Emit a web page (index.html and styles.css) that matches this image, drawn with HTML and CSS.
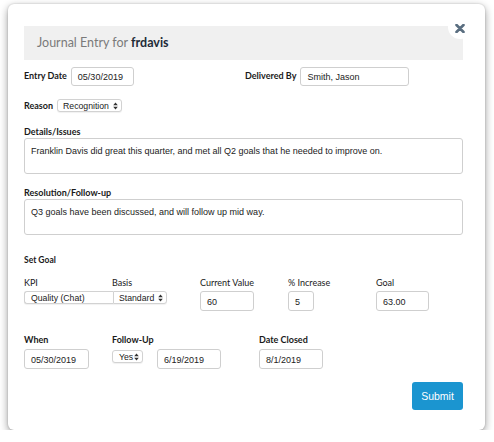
FILE: index.html
```html
<!DOCTYPE html>
<html>
<head>
<meta charset="utf-8">
<link rel="stylesheet" href="styles.css">
</head>
<body>
<div class="modal">
  <button class="close" aria-label="Close">
    <svg width="10" height="9" viewBox="0 0 10 9"><path d="M1.5 1 L8.5 8 M8.5 1 L1.5 8" stroke="#5a6e80" stroke-width="2.6" stroke-linecap="round"/></svg>
  </button>
  <div class="header">Journal Entry for <strong>frdavis</strong></div>

  <div class="row-top">
    <div class="group">
      <span class="lbl">Entry Date</span>
      <span class="input w63">05/30/2019</span>
    </div>
    <div class="group">
      <span class="lbl">Delivered By</span>
      <span class="input w109">Smith, Jason</span>
    </div>
  </div>

  <div class="row-reason group">
    <span class="lbl">Reason</span>
    <span class="select w65">Recognition<svg class="arr" width="5" height="8" viewBox="0 0 5 8"><path d="M2.5 0.5 L4.8 3.2 L0.2 3.2 Z M2.5 7.5 L4.8 4.8 L0.2 4.8 Z" fill="#333"/></svg></span>
  </div>

  <div class="lbl block first">Details/Issues</div>
  <div class="textarea">Franklin Davis did great this quarter, and met all Q2 goals that he needed to improve on.</div>

  <div class="lbl block second">Resolution/Follow-up</div>
  <div class="textarea">Q3 goals have been discussed, and will follow up mid way.</div>

  <div class="lbl setgoal">Set Goal</div>

  <div class="goal-grid">
    <span class="sub">KPI</span>
    <span class="sub">Basis</span>
    <span class="sub">Current Value</span>
    <span class="sub">% Increase</span>
    <span class="sub">Goal</span>
    <span class="select kpi">Quality (Chat)</span>
    <span class="select basis">Standard<svg class="arr" width="5" height="8" viewBox="0 0 5 8"><path d="M2.5 0.5 L4.8 3.2 L0.2 3.2 Z M2.5 7.5 L4.8 4.8 L0.2 4.8 Z" fill="#333"/></svg></span>
    <span class="input tall w54">60</span>
    <span class="input tall w26">5</span>
    <span class="input tall w53">63.00</span>
  </div>

  <div class="when-grid">
    <span class="lbl">When</span>
    <span class="lbl">Follow-Up</span>
    <span class="lbl">Date Closed</span>
    <span class="input tall w65">05/30/2019</span>
    <span class="follow">
      <span class="select yes">Yes<svg class="arr" width="5" height="8" viewBox="0 0 5 8"><path d="M2.5 0.5 L4.8 3.2 L0.2 3.2 Z M2.5 7.5 L4.8 4.8 L0.2 4.8 Z" fill="#333"/></svg></span>
      <span class="input tall w64">6/19/2019</span>
    </span>
    <span class="input tall w64">8/1/2019</span>
  </div>

  <div class="actions">
    <button class="submit">Submit</button>
  </div>
</div>
</body>
</html>
```

FILE: styles.css
```css
html, body {
  margin: 0;
  padding: 0;
  background: #ffffff;
}

body {
  font-family: Lato, "Liberation Sans", sans-serif;
  color: #222;
}

.modal {
  position: relative;
  box-sizing: border-box;
  margin: 4px 0 0 8px;
  width: 477px;
  height: 426px;
  padding: 22px 22px 0 16px;
  background: #fff;
  border-radius: 6px;
  box-shadow: 0 3px 9px rgba(0, 0, 0, 0.4), 0 0 2px rgba(0, 0, 0, 0.2);
}

.close {
  position: absolute;
  left: 440px;
  top: 11px;
  width: 24px;
  height: 24px;
  border: none;
  border-radius: 50%;
  background: #fff;
  padding: 0;
  display: flex;
  align-items: center;
  justify-content: center;
}

.close svg {
  margin-left: -1px;
  margin-top: 2px;
}

.header {
  height: 34px;
  line-height: 34px;
  background: #f0f0f0;
  padding-left: 13px;
  font-size: 12.5px;
  color: #7a7a7a;
}

.header strong {
  color: #1e2b38;
  font-weight: 700;
}

.lbl {
  font-size: 9px;
  font-weight: 700;
  color: #1a1a1a;
  line-height: 12px;
}

.group {
  display: flex;
  align-items: center;
  gap: 4px;
}

.row-top {
  margin-top: 7px;
  display: grid;
  grid-template-columns: 221px auto;
  height: 19px;
}

.row-top .group .lbl {
  margin-top: -2px;
}

.input {
  box-sizing: border-box;
  display: flex;
  align-items: center;
  height: 19px;
  padding: 0 6px;
  border: 1px solid #cfcfcf;
  border-radius: 3px;
  background: #fff;
  font-family: "Liberation Sans", Arial, sans-serif;
  font-size: 9px;
  color: #222;
  white-space: nowrap;
}

.input.tall {
  height: 20px;
  padding-top: 1px;
}

.w26 { width: 26px; }
.w53 { width: 53px; }
.w54 { width: 54px; }
.w63 { width: 63px; }
.w64 { width: 64px; }
.w65 { width: 65px; }
.w109 { width: 109px; }

.select {
  box-sizing: border-box;
  display: flex;
  align-items: center;
  justify-content: space-between;
  height: 13px;
  padding: 0 3px 0 5px;
  border: 1px solid #d2d2d2;
  border-radius: 3px;
  background: #fff;
  box-shadow: 0 1px 1px rgba(0, 0, 0, 0.06);
  font-family: "Liberation Sans", Arial, sans-serif;
  font-size: 8.7px;
  color: #222;
  white-space: nowrap;
}

.row-reason {
  margin-top: 13px;
  height: 13px;
}

.lbl.block {
  display: block;
}

.lbl.first {
  margin-top: 14px;
}

.lbl.second {
  margin-top: 13px;
  margin-bottom: 0;
}

.textarea {
  box-sizing: border-box;
  height: 36px;
  width: 439px;
  padding: 6px 6px;
  border: 1px solid #cfcfcf;
  border-radius: 3px;
  font-family: "Liberation Sans", Arial, sans-serif;
  font-size: 9px;
  line-height: 12px;
  color: #222;
}

.setgoal {
  display: block;
  margin-top: 19px;
  font-size: 8.5px;
}

.goal-grid {
  margin-top: 11px;
  display: grid;
  grid-template-columns: 88px 88px 88px 88px auto;
  grid-template-rows: 12px 20px;
  row-gap: 2px;
  align-items: start;
}

.sub {
  font-size: 9px;
  line-height: 12px;
  color: #1a1a1a;
}

.select.kpi {
  width: 89px;
  padding-left: 6px;
  border-radius: 3px 0 0 3px;
  border-right: none;
}

.select.basis {
  width: 54px;
  margin-left: 1px;
  border-radius: 0 3px 3px 0;
}

.when-grid {
  margin-top: 23px;
  display: grid;
  grid-template-columns: 88px 147px auto;
  grid-template-rows: 12px 20px;
  row-gap: 3px;
  align-items: start;
}

.follow {
  display: flex;
  align-items: flex-start;
  gap: 14px;
}

.select.yes {
  width: 31px;
  margin-top: 1px;
  padding-left: 6px;
}

.actions {
  margin-top: 13px;
  display: flex;
  justify-content: flex-end;
}

.submit {
  width: 51px;
  height: 28px;
  border: none;
  border-radius: 3px;
  background: #1b95d0;
  color: #fff;
  font-family: "Liberation Sans", Arial, sans-serif;
  font-size: 10.5px;
  padding: 0;
}
```
